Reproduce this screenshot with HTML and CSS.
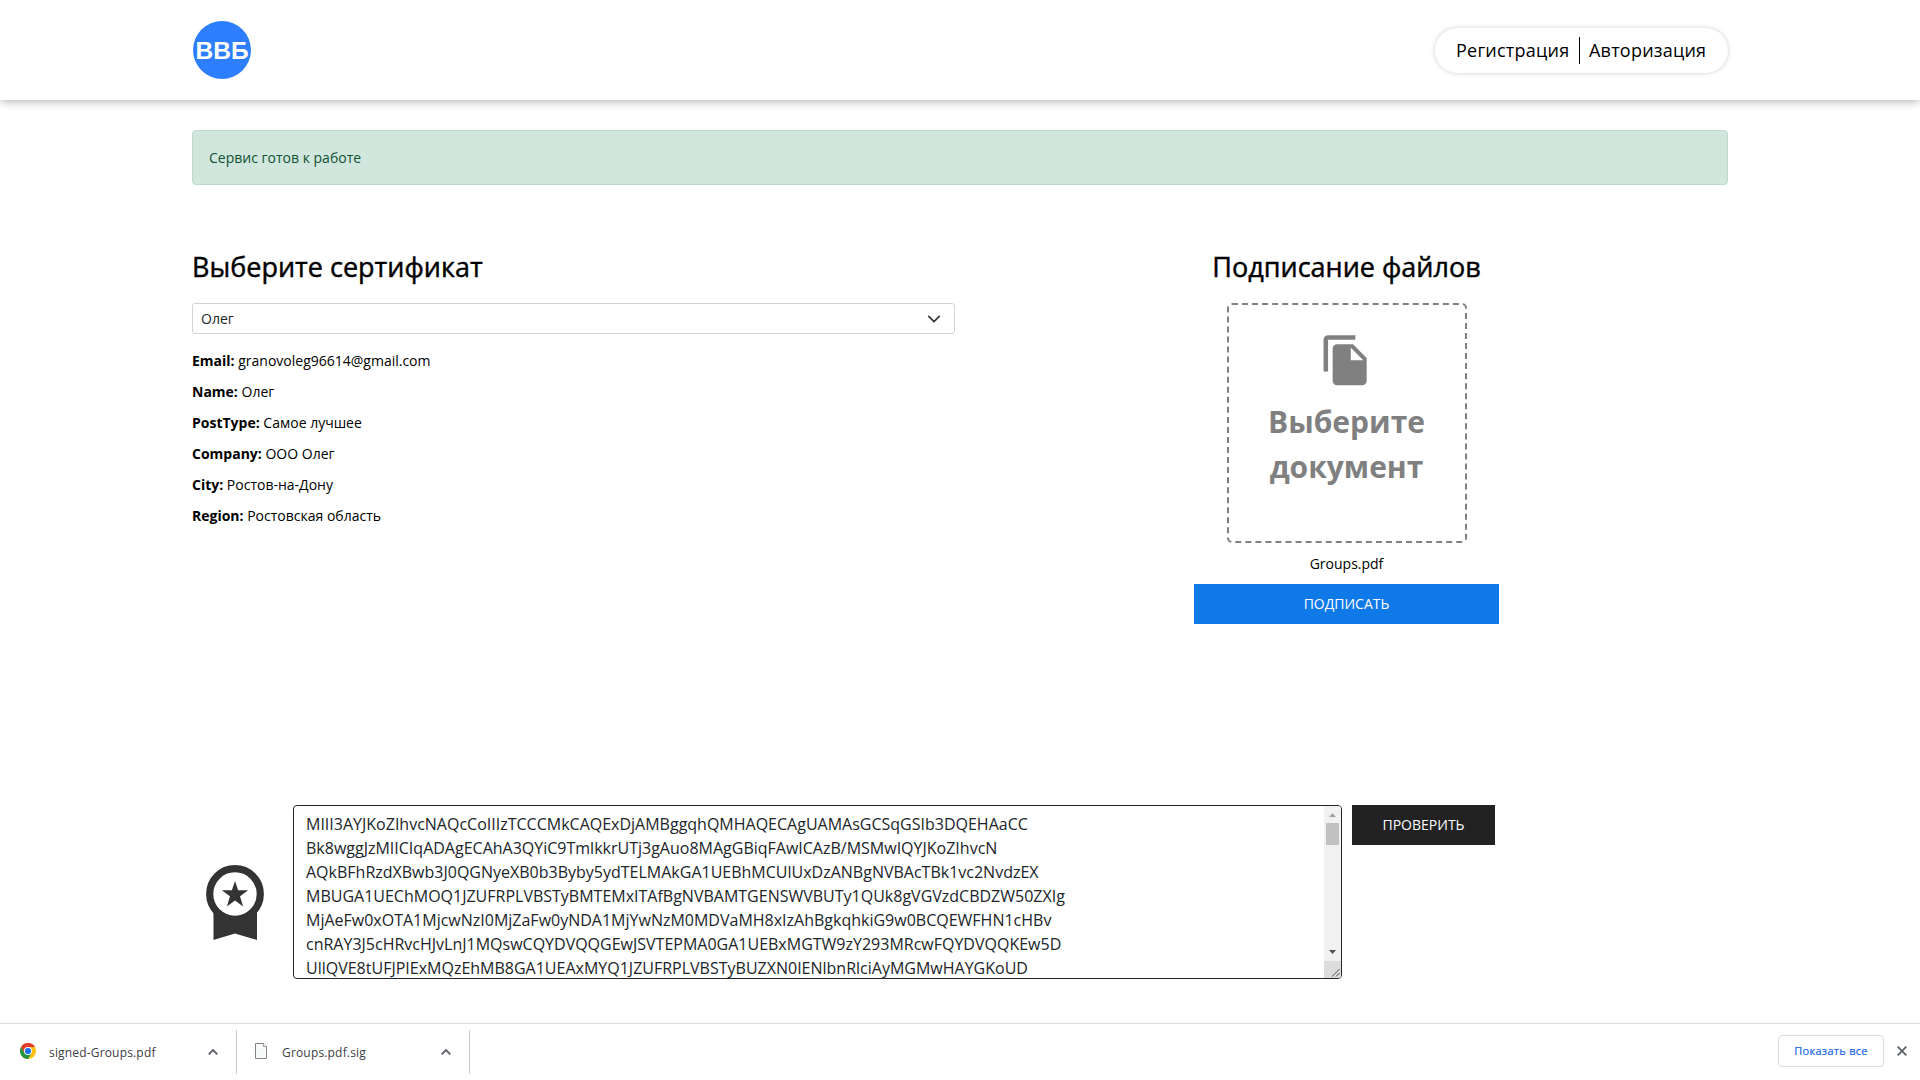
FILE: index.html
```html
<!DOCTYPE html>
<html lang="ru">
<head>
<meta charset="utf-8">
<title>ВВБ</title>
<link rel="stylesheet" href="styles.css">
</head>
<body>
<header class="header">
  <div class="logo"><span>ВВБ</span></div>
  <nav class="auth">
    <a class="auth-link reg">Регистрация</a>
    <a class="auth-link login">Авторизация</a>
  </nav>
</header>
<main class="container">
  <div class="alert">Сервис готов к работе</div>
  <div class="columns">
    <section class="cert">
      <h3 class="title">Выберите сертификат</h3>
      <div class="select">
        <span>Олег</span>
        <svg class="chevron" viewBox="0 0 16 16"><path d="M2 5l6 6 6-6" fill="none" stroke="#343a40" stroke-width="2" stroke-linecap="round" stroke-linejoin="round"/></svg>
      </div>
      <p class="info"><b>Email:</b> granovoleg96614@gmail.com</p>
      <p class="info"><b>Name:</b> Олег</p>
      <p class="info"><b>PostType:</b> Самое лучшее</p>
      <p class="info"><b>Company:</b> ООО Олег</p>
      <p class="info"><b>City:</b> Ростов-на-Дону</p>
      <p class="info"><b>Region:</b> Ростовская область</p>
    </section>
    <section class="sign">
      <h3 class="title">Подписание файлов</h3>
      <div class="drop">
        <svg class="copy-icon" viewBox="0 0 24 24"><path fill="#808080" d="M16 1H4c-1.1 0-2 .9-2 2v14h2V3h12V1zm-1 4l6 6v10c0 1.100-.9 2-2 2H7.990C6.890 23 6 22.100 6 21l.01-14c0-1.100.89-2 1.990-2h7zm-1 7h5.500L14 6.500V12z"/></svg>
        <div class="drop-text">Выберите<br>документ</div>
      </div>
      <div class="file-name">Groups.pdf</div>
      <button class="btn btn-blue">ПОДПИСАТЬ</button>
    </section>
  </div>
  <div class="verify">
    <svg class="medal" viewBox="0 0 58 75">
      <path fill="#333" d="M7.500 44h43.500v31L29 68.500 7.500 75z"/>
      <circle cx="29" cy="29" r="25.300" fill="#fff" stroke="#333" stroke-width="7.200"/>
      <path fill="#333" d="M29 16l3.100 9.300h10.100l-8.200 6 3.100 10.200-8.100-6-8.100 6 3.100-10.200-8.200-6h10.100z"/>
    </svg>
    <div class="textarea">
      <div class="lines">
        <div>MIII3AYJKoZIhvcNAQcCoIIIzTCCCMkCAQExDjAMBggqhQMHAQECAgUAMAsGCSqGSIb3DQEHAaCC</div>
        <div>Bk8wggJzMIICIqADAgECAhA3QYiC9TmlkkrUTj3gAuo8MAgGBiqFAwICAzB/MSMwIQYJKoZIhvcN</div>
        <div>AQkBFhRzdXBwb3J0QGNyeXB0b3Byby5ydTELMAkGA1UEBhMCUlUxDzANBgNVBAcTBk1vc2NvdzEX</div>
        <div>MBUGA1UEChMOQ1JZUFRPLVBSTyBMTEMxITAfBgNVBAMTGENSWVBUTy1QUk8gVGVzdCBDZW50ZXIg</div>
        <div>MjAeFw0xOTA1MjcwNzI0MjZaFw0yNDA1MjYwNzM0MDVaMH8xIzAhBgkqhkiG9w0BCQEWFHN1cHBv</div>
        <div>cnRAY3J5cHRvcHJvLnJ1MQswCQYDVQQGEwJSVTEPMA0GA1UEBxMGTW9zY293MRcwFQYDVQQKEw5D</div>
        <div>UllQVE8tUFJPIExMQzEhMB8GA1UEAxMYQ1JZUFRPLVBSTyBUZXN0IENlbnRlciAyMGMwHAYGKoUD</div>
      </div>
      <div class="scrollbar">
        <svg class="arrow" viewBox="0 0 17 17"><path fill="#a3a3a3" d="M5 11h7L8.500 7z"/></svg>
        <div class="thumb"></div>
        <svg class="arrow arrow-down" viewBox="0 0 17 17"><path fill="#505050" d="M5 6h7L8.500 10z"/></svg>
        <svg class="grip" viewBox="0 0 17 17"><path fill="none" stroke="#505050" d="M8 15.500L15.500 8M12 15.500L15.500 12"/></svg>
      </div>
    </div>
    <button class="btn btn-dark">ПРОВЕРИТЬ</button>
  </div>
</main>
<footer class="downloads">
  <div class="item">
    <svg class="chrome" viewBox="0 0 16 16">
      <circle cx="8" cy="8" r="8" fill="#fbc116"/>
      <path fill="#229342" d="M1.070 4A8 8 0 0 0 8 16l3.500-6L8 8 4.500 10z"/>
      <path fill="#e33b2e" d="M1.070 4A8 8 0 0 1 14.930 4H8L4.500 10z"/>
      <circle cx="8" cy="8" r="4" fill="#fff"/>
      <circle cx="8" cy="8" r="3.100" fill="#1a73e8"/>
    </svg>
    <span class="name">signed-Groups.pdf</span>
    <svg class="up" viewBox="0 0 10 6"><path d="M.7 5.300L5 1l4.300 4.300" fill="none" stroke="#5f6368" stroke-width="1.900"/></svg>
  </div>
  <div class="item second">
    <svg class="doc" viewBox="0 0 12 16"><path fill="#f8f9f9" stroke="#858585" d="M.5.5h8l3 3v12H.5z"/><path fill="#fff" stroke="#858585" stroke-width=".8" d="M8.500.5v3h3"/></svg>
    <span class="name">Groups.pdf.sig</span>
    <svg class="up" viewBox="0 0 10 6"><path d="M.7 5.300L5 1l4.300 4.300" fill="none" stroke="#5f6368" stroke-width="1.900"/></svg>
  </div>
  <button class="show-all">Показать все</button>
  <svg class="close" viewBox="0 0 10 10"><path d="M.7.7l8.600 8.600M9.300.7L.7 9.300" stroke="#5f6368" stroke-width="1.900"/></svg>
</footer>
</body>
</html>
```
FILE: styles.css
```css
* { box-sizing: border-box; }
body {
  margin: 0;
  height: 1080px;
  display: flex;
  flex-direction: column;
  overflow: hidden;
  background: #fff;
  color: #000;
  font: 14px/21px "Open Sans", "Noto Sans", sans-serif;
}
svg { display: block; flex: none; }
span { white-space: nowrap; }
button { font-family: inherit; cursor: pointer; }

.header {
  flex: none;
  height: 100px;
  padding: 0 192px 0 193px;
  display: flex;
  align-items: center;
  justify-content: space-between;
  box-shadow: 0 0 10px rgba(0, 0, 0, .4);
}
.logo {
  width: 58px;
  height: 58px;
  padding-top: 1px;
  display: flex;
  align-items: center;
  justify-content: center;
  border-radius: 50%;
  background: #2d7fff;
  color: #fff;
  font: 600 24.5px/30px "Liberation Sans", sans-serif;
}
.auth {
  width: 293px;
  height: 45px;
  display: flex;
  align-items: center;
  margin-top: 1px;
  padding-left: 21px;
  border-radius: 23px;
  box-shadow: 0 0 5px rgba(0, 0, 0, .2);
  font-size: 18px;
  line-height: 27px;
  letter-spacing: .22px;
}
.reg { width: 124px; border-right: 1px solid #000; }
.login { padding-left: 9px; }

.container { width: 1536px; margin: 30px auto 0; flex: 1; }
.alert {
  height: 55px;
  padding: 16px;
  border: 1px solid #badbcc;
  border-radius: 4px;
  background: #d1e7dd;
  color: #0f5132;
}
.columns { display: flex; margin-top: 65px; height: 555px; }
.cert { width: 763px; margin-right: 239px; }
.sign { width: 305px; display: flex; flex-direction: column; align-items: center; }
.title {
  margin: 0 0 19px;
  font-size: 27px;
  line-height: 34px;
  font-weight: 500;
  white-space: nowrap;
  -webkit-text-stroke: .45px #000;
}
.select {
  height: 31px;
  margin-bottom: 16px;
  padding: 0 13px 0 8px;
  display: flex;
  align-items: center;
  justify-content: space-between;
  border: 1px solid #ced4da;
  border-radius: 3px;
  color: #212529;
}
.chevron { width: 14px; height: 14px; }
.info { margin: 0 0 10px; }
.drop {
  width: 240px;
  height: 240px;
  padding-top: 28px;
  display: flex;
  flex-direction: column;
  align-items: center;
  border: 2px dashed #808080;
  border-radius: 5px;
}
.copy-icon { width: 54.5px; height: 54.5px; }
.drop-text {
  margin-top: 11px;
  text-align: center;
  color: #808080;
  font-weight: 700;
  font-size: 30px;
  line-height: 45px;
}
.file-name { margin: 10px 0; }
.btn {
  height: 40px;
  padding: 0 0 2px;
  border: 0;
  color: #fff;
  font-size: 14px;
}
.btn-blue { width: 305px; background: #0f79e7; }
.btn-dark { width: 143px; background: #222; }

.verify { display: flex; align-items: flex-start; padding-left: 14px; }
.medal { width: 58px; height: 75px; margin: 60px 29px 0 0; }
.textarea {
  width: 1049px;
  height: 174px;
  margin-right: 10px;
  padding-left: 12px;
  display: flex;
  justify-content: space-between;
  overflow: hidden;
  border: 1px solid #212529;
  border-radius: 4px;
  color: #212529;
  font-size: 16px;
  line-height: 24px;
}
.lines { padding-top: 6px; white-space: nowrap; }
.scrollbar { width: 17px; display: flex; flex-direction: column; align-items: center; background: #f1f1f1; }
.arrow { width: 17px; height: 17px; }
.thumb { width: 13px; height: 22px; background: #c1c1c1; }
.arrow-down { margin-top: auto; }
.grip { width: 17px; height: 17px; background: #dcdcdc; }

.downloads {
  flex: none;
  height: 57px;
  display: flex;
  align-items: center;
  border-top: 1px solid #d9dadc;
  color: #3c4043;
  font-size: 12px;
}
.name { letter-spacing: .17px; }
.item {
  width: 237px;
  height: 44px;
  padding: 0 18px 0 20px;
  display: flex;
  align-items: center;
  border-right: 1px solid #c9cacb;
}
.second { width: 233px; padding-left: 18px; }
.chrome { width: 16px; height: 16px; margin: 0 13px 2px 0; }
.doc { width: 12px; height: 16px; margin: 0 15px 2px 0; }
.up { width: 10px; height: 6px; margin-left: auto; }
.show-all {
  width: 106px;
  height: 32px;
  margin: 0 13px 2px auto;
  padding: 0 0 2px;
  border: 1px solid #dadce0;
  border-radius: 4px;
  background: #fff;
  color: #1a67e8;
  font-size: 11px;
  letter-spacing: .28px;
  -webkit-text-stroke: .2px #1a67e8;
}
.close { width: 10px; height: 10px; margin: 0 13px 2px 0; }
```
